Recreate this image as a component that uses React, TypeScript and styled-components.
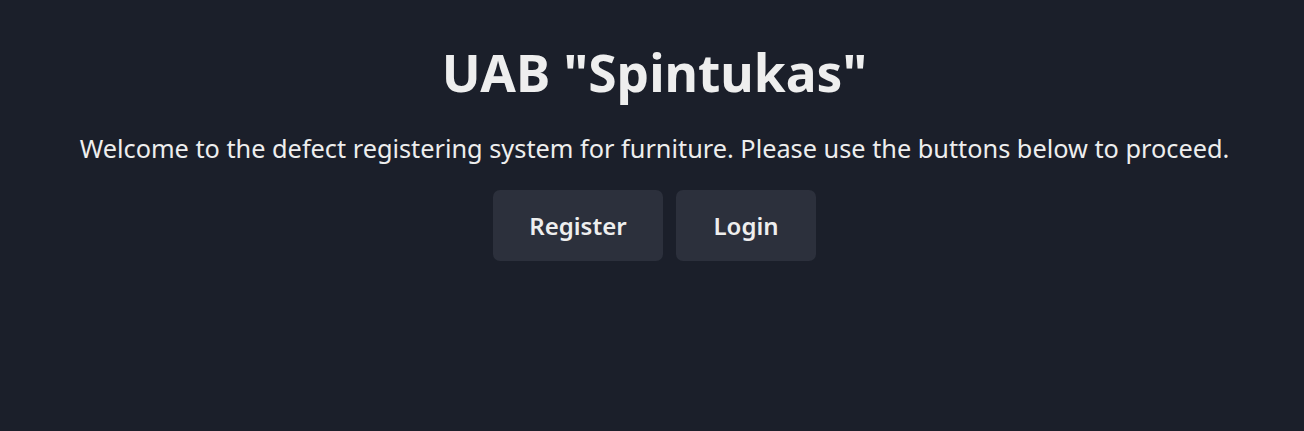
import React from "react";
import styled, { createGlobalStyle } from "styled-components";

const Global = createGlobalStyle`
  html, body { margin: 0; padding: 0; background: #1b1f2a; }
  body { font-family: "Noto Sans", "Open Sans", sans-serif; color: #eeeeee; }
`;

const Page = styled.main`
  min-height: 431px;
  display: flex;
  flex-direction: column;
  align-items: center;
  padding: 38px 0 0 5px;
  box-sizing: border-box;
`;

const Title = styled.h1`
  margin: 0;
  font-size: 51.5px;
  font-weight: 700;
  line-height: 68px;
  color: #eeeeee;
`;

const Lead = styled.p`
  margin: 25px 0 0;
  font-size: 25.3px;
  line-height: 34px;
  color: #eeeeee;
`;

const Actions = styled.div`
  display: flex;
  gap: 13px;
  margin-top: 25px;
`;

const Button = styled.button<{ $w: number }>`
  width: ${(p) => p.$w}px;
  height: 71px;
  border: none;
  border-radius: 7px;
  background: #2c303c;
  color: #eeeeee;
  font-family: inherit;
  font-size: 24px;
  font-weight: 600;
  cursor: pointer;
`;

export default function App() {
  return (
    <>
      <Global />
      <Page>
        <Title>UAB "Spintukas"</Title>
        <Lead>Welcome to the defect registering system for furniture. Please use the buttons below to proceed.</Lead>
        <Actions>
          <Button $w={170}>Register</Button>
          <Button $w={140}>Login</Button>
        </Actions>
      </Page>
    </>
  );
}
